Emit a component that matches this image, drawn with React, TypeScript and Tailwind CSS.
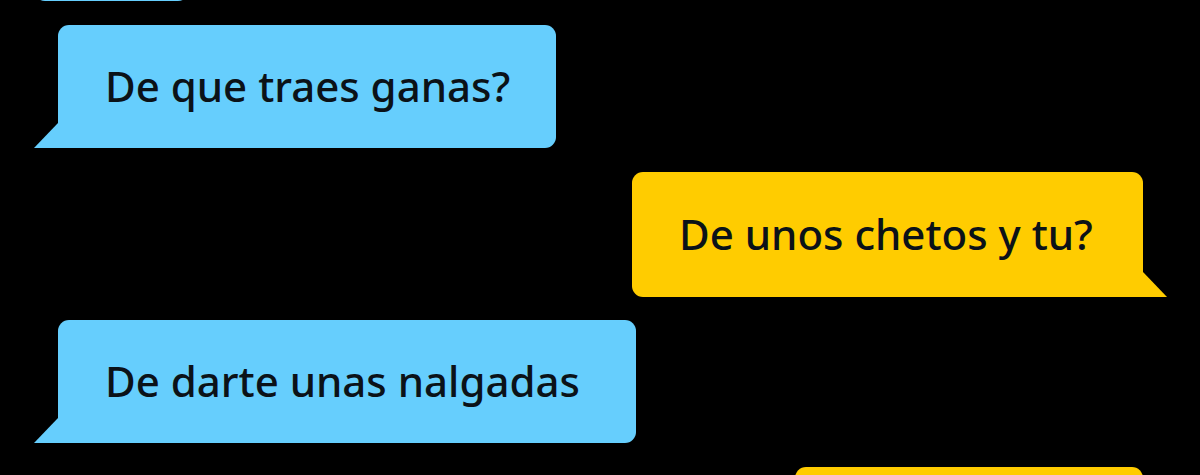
import React from "react";

type Side = "left" | "right";

function Bubble({ text, side, width, height, mt }: { text: string; side: Side; width: string; height: string; mt: string }) {
  const isLeft = side === "left";
  return (
    <div className={(isLeft ? "flex justify-start pl-[58px] " : "flex justify-end pr-[57px] ") + mt}>
      <div
        className={
          "relative flex items-center pl-[47px] " +
          width +
          " " +
          height +
          (isLeft
            ? " rounded-tl-[11px] rounded-tr-[11px] rounded-br-[11px] bg-[#66cefd]"
            : " rounded-tl-[11px] rounded-tr-[11px] rounded-bl-[11px] bg-[#ffcc00]")
        }
      >
        {isLeft ? (
          <svg className="absolute bottom-0 left-[-24px]" width="25" height="25" viewBox="0 0 25 25">
            <polygon points="24,0 25,0 25,25 0,25" fill="#66cefd" />
          </svg>
        ) : (
          <svg className="absolute bottom-0 right-[-24px]" width="25" height="25" viewBox="0 0 25 25">
            <polygon points="0,0 1,0 25,25 0,25" fill="#ffcc00" />
          </svg>
        )}
        <span
          className="text-[42px] font-medium leading-none text-[#0b1218] pb-[2px]"
          style={{ fontFamily: '"Noto Sans", "Liberation Sans", sans-serif' }}
        >
          {text}
        </span>
      </div>
    </div>
  );
}

export default function App() {
  return (
    <div className="h-[475px] w-[1200px] overflow-hidden bg-black">
      <div className="mt-[-122px] flex flex-col">
        <div className="flex justify-start pl-[34px]">
          <div className="h-[123px] w-[155px] rounded-b-[11px] bg-[#66cefd]" />
        </div>
        <Bubble text="De que traes ganas?" side="left" width="w-[498px]" height="h-[123px]" mt="mt-[24px]" />
        <Bubble text="De unos chetos y tu?" side="right" width="w-[511px]" height="h-[125px]" mt="mt-[24px]" />
        <Bubble text="De darte unas nalgadas" side="left" width="w-[578px]" height="h-[123px]" mt="mt-[23px]" />
        <div className="mt-[24px] flex justify-end pr-[57px]">
          <div className="h-[123px] w-[348px] rounded-t-[11px] bg-[#ffcc00]" />
        </div>
      </div>
    </div>
  );
}
